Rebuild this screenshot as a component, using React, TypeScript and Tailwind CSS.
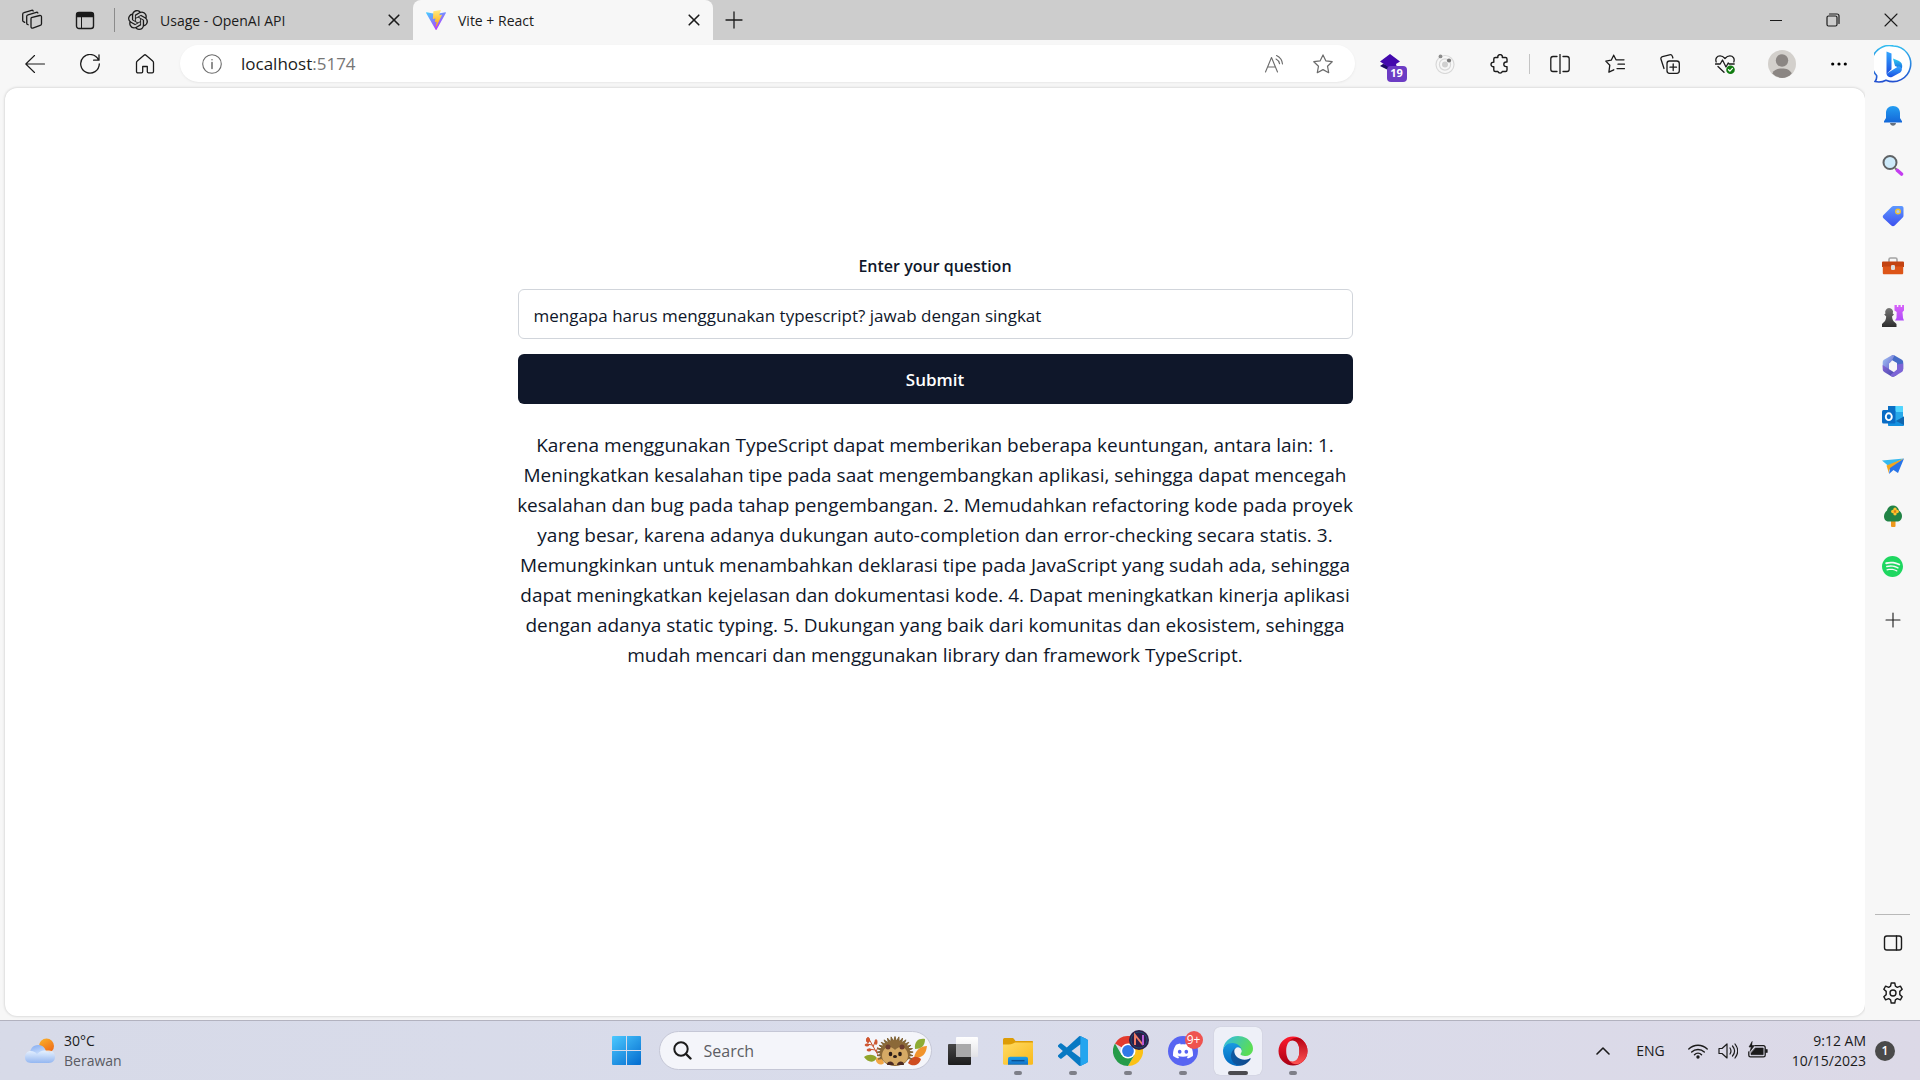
import { useState } from "react";
import type { ReactNode } from "react";
import { SiOpenai, SiDiscord, SiSpotify } from "react-icons/si";

type IconProps = { children: ReactNode; size?: string; box?: string; stroke?: string };

function Line({ children, size = "size-5", box = "0 0 20 20", stroke = "1.1" }: IconProps) {
  return (
    <svg className={`${size} shrink-0`} viewBox={box} fill="none" stroke="currentColor" strokeWidth={stroke} strokeLinecap="round" strokeLinejoin="round" aria-hidden="true">
      {children}
    </svg>
  );
}

function Art({ children, size = "size-[22px]", box = "0 0 22 22" }: IconProps) {
  return (
    <svg className={`${size} shrink-0`} viewBox={box} aria-hidden="true">
      {children}
    </svg>
  );
}

function Grad({ id, a, b, x2 = "0", y2 = "1" }: { id: string; a: string; b: string; x2?: string; y2?: string }) {
  return (
    <linearGradient id={id} x1="0" y1="0" x2={x2} y2={y2}>
      <stop offset="0" stopColor={a} />
      <stop offset="1" stopColor={b} />
    </linearGradient>
  );
}

function CloseIcon() {
  return (
    <Line size="size-3" box="0 0 12 12" stroke="1.6">
      <path d="M1.2 1.2l9.6 9.6M10.8 1.2l-9.6 9.6" />
    </Line>
  );
}

function ViteLogo() {
  return (
    <Art size="size-5" box="0 0 256 257">
      <defs>
        <Grad id="viteA" a="#41d1ff" b="#bd34fe" x2="0.6" />
        <Grad id="viteB" a="#ffea83" b="#ffa800" />
      </defs>
      <path fill="url(#viteA)" d="M255.153 37.938L134.897 252.976c-2.483 4.44-8.862 4.466-11.382.048L.875 37.958c-2.746-4.814 1.371-10.646 6.827-9.67l120.385 21.517a6.537 6.537 0 0 0 2.322-.004l117.867-21.483c5.438-.991 9.574 4.796 6.877 9.62Z" />
      <path fill="url(#viteB)" d="M185.432.063L96.44 17.501a3.268 3.268 0 0 0-2.634 3.014l-5.474 92.456a3.268 3.268 0 0 0 3.997 3.378l24.777-5.718c2.318-.535 4.413 1.507 3.936 3.838l-7.361 36.047c-.495 2.426 1.782 4.5 4.151 3.78l15.304-4.649c2.372-.72 4.652 1.36 4.15 3.788l-11.698 56.621c-.732 3.542 3.979 5.473 5.943 2.437l1.313-2.028l72.516-144.72c1.215-2.423-.88-5.186-3.54-4.672l-25.505 4.922c-2.396.462-4.435-1.77-3.759-4.114l16.646-57.705c.677-2.35-1.37-4.583-3.769-4.113Z" />
    </Art>
  );
}

function TabStrip() {
  return (
    <header className="flex h-10 items-stretch bg-[#cdcdcd] text-[14px] text-[#1b1b1b]">
      <div className="flex shrink-0 items-center pl-[21px]">
        <button aria-label="Workspaces" className="mr-8">
          <Line size="size-[22px]" box="0 0 22 22" stroke="1.3">
            <path d="M10.3 8.7l8.5-2.2c.9-.2 1.7.4 1.7 1.3v6.9c0 .8-.5 1.5-1.3 1.7l-7.4 2.7c-.9.3-1.8-.4-1.8-1.3V10c0-.6.1-1.100.3-1.300z" />
            <path d="M7.200 15.800l-.9-.5c-.4-.2-.6-.6-.6-1V7.500c0-.8.5-1.500 1.300-1.700l8.300-2.500c.7-.2 1.300.1 1.600.7" />
            <path d="M3.700 13.400l-1.400-.9c-.4-.2-.6-.6-.6-1V5.300c0-.8.5-1.500 1.300-1.700l7.600-2.300c.7-.2 1.300.1 1.600.7" />
          </Line>
        </button>
        <button aria-label="Tab actions" className="mr-[19px]">
          <Line size="size-5" stroke="1.4">
            <rect x="1.5" y="2.5" width="17" height="16" rx="2.5" />
            <path d="M2 3.5h16v3H2z" fill="currentColor" />
            <path d="M6.5 7v11" strokeWidth="1" />
          </Line>
        </button>
        <div className="h-6 w-px bg-[#8b8b8b]" />
      </div>
      <div className="flex w-[298px] shrink-0 items-center px-[13px]">
        <SiOpenai className="size-5 shrink-0" aria-hidden="true" />
        <span className="ml-3 flex-1 whitespace-nowrap">Usage - OpenAI API</span>
        <button aria-label="Close Usage tab"><CloseIcon /></button>
      </div>
      <div className="flex w-[300px] shrink-0 items-center rounded-t-lg bg-[#f7f7f7] px-[13px]">
        <ViteLogo />
        <span className="ml-3 flex-1 whitespace-nowrap">Vite + React</span>
        <button aria-label="Close Vite tab"><CloseIcon /></button>
      </div>
      <button aria-label="New tab" className="ml-3 shrink-0">
        <Line size="size-[18px]" box="0 0 18 18" stroke="1.3"><path d="M9 1v16M1 9h16" /></Line>
      </button>
      <div className="flex-1" />
      <div className="flex shrink-0 items-center">
        <button aria-label="Minimize" className="flex w-14 justify-center">
          <Line size="size-3" box="0 0 12 12"><path d="M0 6.5h12" /></Line>
        </button>
        <button aria-label="Restore" className="flex w-[58px] justify-center">
          <Line size="size-[14px]" box="0 0 14 14" stroke="1.2">
            <rect x="1" y="3" width="10" height="10" rx="1.5" />
            <path d="M3.5 1H11a2 2 0 0 1 2 2v7.5" />
          </Line>
        </button>
        <button aria-label="Close window" className="flex w-[58px] justify-center">
          <Line size="size-[14px]" box="0 0 14 14"><path d="M1 1l12 12M13 1L1 13" /></Line>
        </button>
      </div>
    </header>
  );
}

function Tool({ label, children, width = "w-[55px]" }: { label: string; children: ReactNode; width?: string }) {
  return (
    <button aria-label={label} className={`flex ${width} shrink-0 items-center justify-center`}>
      {children}
    </button>
  );
}

function Toolbar() {
  return (
    <nav className="flex h-[47px] items-stretch bg-[#f7f7f7] pl-[7px] text-[#1b1b1b]">
      <Tool label="Back"><Line><path d="M9.5 1.5L.8 10l8.7 8.5M1 10h18.5" /></Line></Tool>
      <Tool label="Refresh">
        <Line stroke="1.3"><path d="M18.5 6A9.3 9.3 0 1 0 19.3 10M19 .8v5.4h-5.4" /></Line>
      </Tool>
      <Tool label="Home">
        <Line stroke="1.3"><path d="M1.5 8.7c0-.7.3-1.3.8-1.7L9 1.2c.6-.5 1.4-.5 2 0L17.7 7c.5.4.8 1 .8 1.7v8.8c0 .8-.6 1.3-1.3 1.3H13.500c-.7 0-1.200-.5-1.200-1.200v-5.100H7.700v5.100c0 .7-.5 1.200-1.200 1.200H2.800c-.7 0-1.300-.5-1.300-1.300z" /></Line>
      </Tool>
      <div className="my-[5px] ml-2 flex flex-1 items-center rounded-full bg-white px-[22px] shadow-sm shadow-black/5">
        <button aria-label="Site information" className="text-[#6b6b6b]">
          <Line><circle cx="10" cy="10" r="9.3" /><path d="M10 8.5v6M10 5.7v.1" strokeWidth="1.5" /></Line>
        </button>
        <span className="ml-[19px] flex-1 text-[17px]">localhost<span className="text-[#767676]">:5174</span></span>
        <button aria-label="Read aloud" className="mr-[29px] text-[#6b6b6b]">
          <Line><path d="M1.5 18L7.5 3.5 13.5 18M3.7 13h7.7M12.5 1.5c3.5 1.7 5.7 5 6 8.5M12 5c2 1 3.2 2.7 3.6 4.8" /></Line>
        </button>
        <button aria-label="Add to favorites" className="text-[#6b6b6b]">
          <Line stroke="1.2"><path d="M10 .9l2.800 5.900 6.400.9-4.700 4.500 1.200 6.500L10 15.600l-5.700 3.100 1.200-6.500L.8 7.700l6.400-.9z" /></Line>
        </button>
      </div>
      <div className="ml-[7px] flex items-stretch">
        <Tool label="Layers extension, 19">
          <span className="relative block size-5">
            <svg viewBox="0 0 20 20" className="size-5" aria-hidden="true">
              <path d="M0 12l3-2 14 2-7 5z" fill="#1b0a63" />
              <path d="M10 0l10 7.500-4 2.500.5 2L10 14.500 3 9.500 0 7.500z" fill="#4309ad" />
            </svg>
            <span className="absolute top-3 left-[7px] flex h-4 w-5 items-center justify-center rounded-sm bg-[#6c3cc4] text-[11px] font-bold text-white">19</span>
          </span>
        </Tool>
        <Tool label="Orbit extension">
          <Art size="size-5" box="0 0 20 20">
            <g fill="none" stroke="#d8d8d8" strokeWidth="1.2"><circle cx="10" cy="10.5" r="9" /><circle cx="10" cy="10.5" r="5.6" /></g>
            <circle cx="10" cy="10.5" r="3" fill="#d0d0d0" />
            <circle cx="5.5" cy="2.4" r="1.9" fill="#8c8c8c" /><circle cx="14" cy="6.5" r="2.1" fill="#7a7a7a" />
          </Art>
        </Tool>
        <Tool label="Extensions">
          <Line stroke="1.4"><path d="M5.300 3.500h2.600a2.300 2.300 0 1 1 4.400 0h3.200c.9 0 1.500.6 1.500 1.500v3h-.9a2.300 2.300 0 0 0 0 4.600h.9V16c0 .9-.6 1.500-1.500 1.500h-3.200a2.300 2.300 0 0 1-4.400 0H5.300c-.9 0-1.500-.6-1.500-1.500v-3.300a2.300 2.300 0 1 1 0-4.500V5c0-.9.6-1.500 1.500-1.500z" /></Line>
        </Tool>
        <div className="flex w-[5px] items-center justify-center"><div className="h-5 w-px bg-[#c4c4c4]" /></div>
        <Tool label="Split screen">
          <Line stroke="1.3"><path d="M7 2.5H3A2.3 2.3 0 0 0 .8 4.800v10.400A2.300 2.300 0 0 0 3 17.500h4M13 2.500h4a2.300 2.300 0 0 1 2.200 2.300v10.400a2.300 2.300 0 0 1-2.200 2.300h-4M10 .5v19" /></Line>
        </Tool>
        <Tool label="Favorites">
          <Line stroke="1.3"><path d="M11 5.800L8.700 1.200 6.200 6.200.8 7.100l4 4.100-.9 7 4.900-2.400M8.700 1.200L11 5.800h8M13 10.200h6.500M12 14.600h7.500" /></Line>
        </Tool>
        <Tool label="Collections">
          <Line stroke="1.3"><rect x="7" y="7" width="12.3" height="12.3" rx="2.5" /><path d="M13.200 10v6.500M10 13.200h6.500M4 14.500L1 5.300c-.4-1.200.3-2.400 1.500-2.700l7-1.800c1.300-.3 2.500.4 2.900 1.600l.5 1.600" /></Line>
        </Tool>
        <Tool label="Browser essentials">
          <Line stroke="1.3">
            <path d="M1.200 8C0 4.500 2 1.800 5.100 1.800 7 1.800 8.500 2.700 10 4.500c1.500-1.800 3-2.700 4.900-2.700C18 1.800 20 4.500 18.800 8M.5 10h4.700l2.300-4 3.500 7 2.200-4 1 1h5M3 12.500l6 5.700" />
            <circle cx="15.5" cy="15.7" r="4.3" fill="#107c10" stroke="none" /><path d="M13.500 15.700l1.400 1.400 2.500-2.700" stroke="#fff" />
          </Line>
        </Tool>
        <Tool label="Profile" width="w-[60px]">
          <Art size="size-7" box="0 0 28 28">
            <circle cx="14" cy="14" r="14" fill="#d3d0cc" /><circle cx="14" cy="10.5" r="6.2" fill="#8b8683" />
            <path d="M4.300 23.500C6 19.800 9.500 18.500 14 18.500s8 1.300 9.700 5A14 14 0 0 1 14 28a14 14 0 0 1-9.700-4.500z" fill="#8b8683" />
          </Art>
        </Tool>
        <Tool label="Settings and more" width="w-[54px]">
          <Art size="size-4" box="0 0 16 16"><circle cx="1.7" cy="8" r="1.6" /><circle cx="8" cy="8" r="1.6" /><circle cx="14.3" cy="8" r="1.6" /></Art>
        </Tool>
        <Tool label="Bing chat" width="w-[54px]">
          <Art size="size-[38px]" box="0 0 38 38">
            <defs><Grad id="ring" a="#32bdf0" b="#2350d0" /><Grad id="b1" a="#35a7ff" b="#1b4fe0" /><Grad id="b2" a="#30d0ee" b="#1768e5" /></defs>
            <path d="M19.500 1A17.800 17.800 0 1 1 12 35.200C8.500 37 4.500 37.300 1 36.500c1.700-2 2-3.500 1.600-6A17.700 17.700 0 0 1 19.500 1z" fill="#fff" stroke="url(#ring)" strokeWidth="1.6" />
            <path d="M12.500 6.500l5 1.900v15.800l-5 4.700z" fill="url(#b1)" />
            <path d="M19 13.500l5.500 2.300c3.500 1.500 4.300 4.700 3.300 8L21 21z" fill="url(#b2)" />
            <path d="M12.500 28.700l12-7.500c3.500.5 4.600 4 1.800 6.200L18 31.900c-2.500 1-5-.5-5.500-3.200z" fill="url(#b1)" />
          </Art>
        </Tool>
      </div>
    </nav>
  );
}

const sideApps: { name: string; art: ReactNode }[] = [
  { name: "Notifications", art: <Art><defs><Grad id="bell" a="#239df2" b="#1467d8" /></defs><path d="M8 18h6c-.3 1.700-1.500 2.700-3 2.700S8.300 19.700 8 18z" fill="#65707d" /><path d="M11 1c4.500 0 7 3 7 7v5l2 3.200V17.500H2v-1.300L4 13V8c0-4 2.500-7 7-7z" fill="url(#bell)" /></Art> },
  { name: "Search", art: <Art><path d="M13 13l3 3" stroke="#777" strokeWidth="2" /><path d="M15.500 15.500l4 3.500" stroke="#c43df0" strokeWidth="3.6" strokeLinecap="round" /><circle cx="8" cy="7.5" r="6.5" fill="#cdeafa" stroke="#5f6265" strokeWidth="2" /></Art> },
  { name: "Shopping", art: <Art><defs><Grad id="tag" a="#5d98ff" b="#3d50ef" /></defs><path d="M12 1h7.500C20.700 1 21.500 1.800 21.500 3v7.500c0 1-.3 1.600-1 2.300l-7.800 7.700c-1 1-2.400 1-3.400 0L1.500 13.200c-1-1-1-2.200 0-3.200L9.500 1.900C10.300 1.200 11 1 12 1z" fill="url(#tag)" /><circle cx="16" cy="6.5" r="2.3" fill="#a6c8ff" stroke="#f2c230" strokeWidth="1.4" /></Art> },
  { name: "Tools", art: <Art><path d="M7 7V4.500C7 3.500 7.500 3 8.500 3h5c1 0 1.500.5 1.500 1.500V7" fill="none" stroke="#a4a4a4" strokeWidth="1.6" /><path d="M1 6.500h20a1 1 0 0 1 1 1V12H0V7.500a1 1 0 0 1 1-1z" fill="#c34312" /><path d="M.8 11.500h20.400V18c0 .9-.5 1.300-1.300 1.300H2.100c-.8 0-1.300-.4-1.300-1.300z" fill="#dd5518" /><rect x="9" y="10" width="4" height="5" rx="1.3" fill="#ddd" /></Art> },
  { name: "Games", art: <Art><defs><Grad id="pawn" a="#777" b="#2e2e2e" /><Grad id="rook" a="#d862fa" b="#b04cf8" /></defs><path d="M12.500 0h2.400v2h1.400V0h2.400v2h1.400V0H22v5.500l-1.500 1.500.5 6 1 2.500h-9L14.500 13l.2-6-2.200-1.500z" fill="url(#rook)" /><path d="M7 3a4 4 0 0 1 3.700 5.600l1.300.8-2 2c.3 3 1.200 4.600 3 6.200L14.500 19v3H0v-3l1.500-1.400c1.700-1.600 2.500-3.200 2.700-6.200l-2-2 1.300-.8A4 4 0 0 1 7 3z" fill="url(#pawn)" /></Art> },
  { name: "Microsoft 365", art: <Art><defs><Grad id="mA" a="#a4c8f5" b="#6257c9" x2="1" /><Grad id="mB" a="#8967d8" b="#3b46a5" x2="1" /></defs><path d="M10 .2c1.400-.4 2 0 3 .5l6.500 3.900c1.200.7 1.700 1.500 1.700 3V14L15 10.300V8L8 4z" fill="#476cc7" /><path d="M12.500.3L10 5.500 7 9v7.500l-5-2.500c-1-.6-1.300-1.300-1.300-2.500V7.500c0-1.400.5-2.300 1.700-3L9 .7c1-.6 2-.8 3.500-.4z" fill="url(#mA)" /><path d="M.7 10v4c0 1.500.6 2.500 1.900 3.200l6.200 3.800c1.500.9 2.800.9 4.300 0l2.500-1.500-8-5z" fill="url(#mB)" /><path d="M21.200 8.500V14c0 1.500-.5 2.500-1.800 3.300l-6.300 3.700c-1.500.9-2.900.9-4.300 0l-1-.6 7.200-5.900V9.500z" fill="#7d65d6" /><path d="M11 6.500l4 2.300v4.400l-4 2.300-4-2.300V8.800z" fill="#f7f7f7" /></Art> },
  { name: "Outlook", art: <Art><rect x="6" y="1" width="15" height="19" rx="1.5" fill="#28a8ea" /><path d="M6 1h7.500v6H6z" fill="#0a6fc4" /><path d="M13.500 1H20a1 1 0 0 1 1 1v5h-7.500z" fill="#51d6ff" /><path d="M6 12l7.500 4L22 11.500V20c0 .7-.5 1-1 1H7c-.6 0-1-.4-1-1z" fill="#1490df" /><path d="M22 11.500V20L14 16z" fill="#1166ae" /><rect x="0" y="5" width="13.5" height="13.5" rx="1.5" fill="#0a6cc5" /><ellipse cx="6.8" cy="11.7" rx="3" ry="3.4" fill="none" stroke="#fff" strokeWidth="1.9" /></Art> },
  { name: "Drop", art: <Art><path d="M0 5.500l22-2L6.500 11z" fill="#35b9ef" /><path d="M22 3.500L7 15v3.500L4.500 10.500z" fill="#f1a51e" /><path d="M22 3.500l-6 14.500-4.500-3L7 19l1-6z" fill="#2874e8" /></Art> },
  { name: "Tree", art: <Art><path d="M9 15h4.500v6a1 1 0 0 1-1 1H10a1 1 0 0 1-1-1z" fill="#ee981c" /><path d="M11 .5c3 0 5.500 2 6 5 2 1.500 3 3.200 3 5.500 0 3.500-2 5.500-5 5.500H7c-3 0-5-2-5-5C2 9 3 7.300 5 5.500c.5-3 3-5 6-5z" fill="#218345" /><g fill="#ffc32e"><circle cx="13" cy="4.3" r="1.7" /><circle cx="13" cy="8.7" r="1.7" /><circle cx="10.8" cy="6.5" r="1.7" /><circle cx="15.2" cy="6.5" r="1.7" /></g><circle cx="13" cy="6.5" r="1.2" fill="#e27b13" /></Art> },
  { name: "Spotify", art: <SiSpotify className="size-[21px] text-[#1ed760]" aria-hidden="true" /> },
];

function Sidebar() {
  return (
    <aside className="flex w-[55px] shrink-0 flex-col items-center bg-[#f7f7f7] pt-[3px] text-[#1b1b1b]">
      {sideApps.map((app) => (
        <button key={app.name} aria-label={app.name} className="flex h-[50px] w-full items-center justify-center">{app.art}</button>
      ))}
      <button aria-label="Customize" className="mt-1 flex h-[50px] w-full items-center justify-center">
        <Line size="size-4" box="0 0 16 16"><path d="M8 1v14M1 8h14" /></Line>
      </button>
      <div className="mt-auto h-px w-[35px] bg-[#b9b9b9]" />
      <button aria-label="Toggle sidebar" className="mt-[3px] flex h-[50px] w-full items-center justify-center">
        <Line stroke="1.4"><rect x="1.5" y="3" width="17" height="14" rx="2.3" /><path d="M13.500 3v14" /></Line>
      </button>
      <button aria-label="Settings" className="mb-[2px] flex h-[50px] w-full items-center justify-center">
        <Line size="size-[22px]" box="0 0 22 22" stroke="1.4"><path d="M9.200 1h3.600l.6 3.200 1.900 1.100 3.100-1.100 1.800 3.100-2.400 2.100v3.200l2.400 2.100-1.800 3.100-3.100-1.100-1.900 1.100-.6 3.200H9.200l-.6-3.200-1.900-1.100-3.100 1.100-1.800-3.100 2.400-2.100V9.400L1.800 7.300l1.800-3.100 3.100 1.100 1.900-1.100z" /><circle cx="11" cy="11" r="3" /></Line>
      </button>
    </aside>
  );
}

const answer = [
  "Karena menggunakan TypeScript dapat memberikan beberapa keuntungan, antara lain: 1.",
  "Meningkatkan kesalahan tipe pada saat mengembangkan aplikasi, sehingga dapat mencegah",
  "kesalahan dan bug pada tahap pengembangan. 2. Memudahkan refactoring kode pada proyek",
  "yang besar, karena adanya dukungan auto-completion dan error-checking secara statis. 3.",
  "Memungkinkan untuk menambahkan deklarasi tipe pada JavaScript yang sudah ada, sehingga",
  "dapat meningkatkan kejelasan dan dokumentasi kode. 4. Dapat meningkatkan kinerja aplikasi",
  "dengan adanya static typing. 5. Dukungan yang baik dari komunitas dan ekosistem, sehingga",
  "mudah mencari dan menggunakan library dan framework TypeScript.",
];

function QuestionPage() {
  const [question, setQuestion] = useState("mengapa harus menggunakan typescript? jawab dengan singkat");
  return (
    <main className="ml-[5px] mb-1 flex flex-1 justify-center rounded-xl bg-white pt-[164px] text-[#0f172a] shadow-[0_0_3px_rgba(0,0,0,0.22)]">
      <div className="flex w-[835px] flex-col">
        <form className="flex flex-col" onSubmit={(e) => e.preventDefault()}>
          <label htmlFor="question" className="text-center text-[16px] leading-7 font-semibold">Enter your question</label>
          <input id="question" value={question} onChange={(e) => setQuestion(e.target.value)} className="mt-[9px] h-[50px] rounded-md border border-[#d1d5db] bg-white px-[15px] pt-[2px] text-[17px] outline-none" />
          <button type="submit" className="mt-[15px] h-[50px] rounded-md bg-[#0f172a] pt-[2px] text-[17px] font-semibold text-white">Submit</button>
        </form>
        <p className="mt-[26px] text-center text-[19px] leading-[30px] whitespace-nowrap">
          {answer.map((line) => (
            <span key={line} className="flex justify-center">{line}</span>
          ))}
        </p>
      </div>
    </main>
  );
}

function Hedgehog() {
  const spikes = Array.from({ length: 19 }, (_, i) => {
    const a = Math.PI * (-0.12 + (1.24 * i) / 18);
    const p = (r: number, t: number) => `${31 - Math.cos(t) * r * 1.1} ${17 - Math.sin(t) * r}`;
    return `M${p(11, a - 0.13)}L${p(16.5, a)}L${p(11, a + 0.13)}`;
  }).join("");
  return (
    <Art size="h-[30px] w-[63px]" box="0 0 63 30">
      <g stroke="#c8502b" strokeWidth="1" fill="#d9572e"><path d="M14 19L5 3M8 9L3 8M9 11l2-5M11 14l-6-1M12 16l2-5" /><ellipse cx="4" cy="4" rx="1.5" ry="2.5" /><ellipse cx="3" cy="9" rx="2" ry="1" /><ellipse cx="12" cy="6" rx="1" ry="2.5" /><ellipse cx="5" cy="14" rx="2" ry="1" /></g>
      <path d="M0 21c4-3 10-3 13 1-3 5-9 5-13-1z" fill="#91a52c" />
      <path d="M12 25c-1-5 6-5 8 2-3 3-7 1-8-2z" fill="#f2a644" />
      <path d="M51 13C50 5 55 2 61 3c0 7-4 10-10 10z" fill="#8eac35" />
      <path d="M50 22c1-8 7-12 13-12-1 8-4 12-13 12z" fill="#f1942c" />
      <path d="M44 27c3-7 8-8 13-4-2 7-9 8-13 4z" fill="#cf4d20" />
      <path d={spikes} fill="#806335" stroke="#806335" />
      <ellipse cx="31" cy="17" rx="15" ry="13" fill="#8b6938" />
      <path d="M18 20c0-5 3-9 7-9 3 0 5 2 6 3 1-1 3-3 6-3 4 0 7 4 7 9 0 6-6 9-13 9s-13-3-13-9z" fill="#d5aa65" />
      <circle cx="24" cy="11" r="2.5" fill="#6c3d31" /><circle cx="38" cy="11" r="2.5" fill="#6c3d31" />
      <ellipse cx="26.5" cy="18" rx="1.8" ry="2.2" fill="#2b1d18" /><ellipse cx="36" cy="18" rx="1.8" ry="2.2" fill="#2b1d18" />
      <ellipse cx="31" cy="20.5" rx="2" ry="1.5" fill="#2b1d18" />
      <path d="M23 29c0-5 7-4 7 0zM33 29c0-4 7-5 7 0z" fill="#4a2a23" />
    </Art>
  );
}

const Explorer = (
  <Art size="size-[30px]" box="0 0 30 30">
    <defs><Grad id="fold" a="#ffdb63" b="#f9b91b" x2="1" /><Grad id="foldB" a="#1ca0e8" b="#1270c8" /></defs>
    <path d="M0 3.500A1.500 1.500 0 0 1 1.500 2H9c1 0 1.500.3 2 1l1.500 2H29c.6 0 1 .4 1 1v6H0z" fill="#dd9c05" />
    <path d="M0 8.500c5 0 9 .3 12-2h18v21c0 .8-.4 1.200-1.200 1.200H1.200C.4 28.700 0 28.300 0 27.500z" fill="url(#fold)" />
    <path d="M5 28.700V23c0-1.500.8-2.300 2.300-2.300h15.400c1.500 0 2.300.8 2.300 2.300v5.700z" fill="url(#foldB)" /><path d="M8.500 24.700h13" stroke="#094f91" strokeWidth="1.3" />
  </Art>
);
const VsCode = (
  <Art size="size-[30px]" box="0 0 24 24">
    <path fill="#0879c3" d="M23.150 2.587L18.210.210a1.494 1.494 0 0 0-1.705.290l-9.460 8.630-4.120-3.128a.999.999 0 0 0-1.276.057L.327 7.261A1 1 0 0 0 .326 8.740L3.899 12 .326 15.260a1 1 0 0 0 .001 1.479L1.650 17.940a.999.999 0 0 0 1.276.057l4.120-3.128 9.460 8.630a1.492 1.492 0 0 0 1.704.290l4.942-2.377A1.500 1.500 0 0 0 24 20.060V3.939a1.500 1.500 0 0 0-.850-1.352zm-5.146 14.861L10.826 12l7.178-5.448v10.896z" />
    <path fill="#25a5ef" d="M18 .1l5.150 2.487c.5.300.850.800.850 1.352V20.060c0 .600-.300 1.100-.850 1.352L18 23.900z" />
  </Art>
);
const Chrome = (
  <span className="relative block size-[30px]">
    <Art size="size-[30px]" box="0 0 30 30">
      <path d="M15 15L2 7.500A15 15 0 0 1 28 7.500z" fill="#e33b2e" />
      <path d="M15 15V7.500h13A15 15 0 0 1 15 30l6.500-11.200z" fill="#fbc116" />
      <path d="M15 15l6.500 3.800L15 30A15 15 0 0 1 2 7.500l6.500 11.300z" fill="#259b48" />
      <circle cx="15" cy="15" r="7.5" fill="#fff" /><circle cx="15" cy="15" r="5.9" fill="#3079e8" />
    </Art>
    <svg viewBox="0 0 20 20" className="absolute -top-[6px] left-4 size-5" aria-hidden="true">
      <circle cx="10" cy="10" r="10" fill="#2d1c48" /><circle cx="10" cy="10" r="8" fill="none" stroke="#1b4d70" />
      <path d="M6 15V5l8 10" fill="none" stroke="#ef7b66" strokeWidth="2" /><path d="M14 15V5" stroke="#b65cd8" strokeWidth="2" />
    </svg>
  </span>
);
const Discord = (
  <span className="relative flex size-[30px] items-center justify-center rounded-full bg-[#5865f2]">
    <SiDiscord className="size-5 text-white" aria-hidden="true" />
    <span className="absolute -top-[5px] left-[17px] flex size-[18px] items-center justify-center rounded-full bg-[#ef5350] text-[12px] text-white">9+</span>
  </span>
);
const Edge = (
  <Art size="size-[30px]" box="0 0 256 256">
    <defs><Grad id="eA" a="#0c59a4" b="#114a8b" x2="1" y2="0" /><Grad id="eB" a="#1b9de2" b="#0067c0" /><Grad id="eC" a="#2fb9ee" b="#5bdd55" x2="1" y2="0.4" /></defs>
    <path fill="url(#eA)" d="M231 190.500c-3.400 1.800-6.900 3.400-10.500 4.700a101.500 101.500 0 0 1-35.900 6.400c-47.300 0-88.500-32.500-88.500-74.300a31.500 31.500 0 0 1 16.400-27.300c-42.800 1.800-53.800 46.400-53.800 72.500 0 74 68.100 81.400 82.800 81.400 7.900 0 19.800-2.300 27-4.600l1.300-.4a128.300 128.300 0 0 0 66.600-52.800 4 4 0 0 0-5.400-5.600Z" />
    <path fill="url(#eB)" d="M105.700 241.400a79.200 79.200 0 0 1-22.700-21.300 80.700 80.700 0 0 1 29.500-120c3.200-1.500 8.500-4.100 15.600-4a32.400 32.400 0 0 1 25.700 13 31.900 31.900 0 0 1 6.300 18.700c0-.2 24.500-79.600-80-79.600-43.900 0-80 41.700-80 78.200a130.200 130.200 0 0 0 12.100 56 128 128 0 0 0 156.400 67 75.500 75.500 0 0 1-62.800-8Z" />
    <path fill="url(#eC)" d="M152.300 148.900c-.9 1-3.400 2.500-3.400 5.600 0 2.600 1.700 5.200 4.800 7.300 14.300 10 41.400 8.600 41.500 8.600a59.600 59.600 0 0 0 30.300-8.300 61.400 61.400 0 0 0 30.400-52.900c.3-22.400-8-37.300-11.300-43.900C223.500 23.900 177.700 0 128 0A128 128 0 0 0 0 126.200c.5-36.500 36.800-66 80-66 3.500 0 23.500.3 42 10a72.600 72.600 0 0 1 30.900 29.300c6.100 10.600 7.200 24.100 7.200 29.500s-2.700 13.300-7.800 19.900Z" />
  </Art>
);
const Opera = (
  <Art size="size-[30px]" box="0 0 30 30">
    <defs><Grad id="oA" a="#ff1b2d" b="#a70014" /><Grad id="oB" a="#b50012" b="#ff5454" /></defs>
    <path fillRule="evenodd" fill="url(#oA)" d="M15 .5a14.500 14.500 0 1 1 0 29 14.500 14.500 0 0 1 0-29zm0 3.500C10.500 4 8.200 9 8.200 15S10.500 26 15 26s6.300-5 6.300-11S19.500 4 15 4z" />
    <path fill="url(#oB)" d="M11 5.500C16-.5 23 2 25 4.500c6 6 6 15 0 21C22 28 16 30.500 11 24.500c5 3 10.500-1 10.500-9.500S16 2.500 11 5.500z" />
  </Art>
);

const taskApps = [
  { name: "File Explorer", icon: Explorer, active: false },
  { name: "Visual Studio Code", icon: VsCode, active: false },
  { name: "Google Chrome", icon: Chrome, active: false },
  { name: "Discord", icon: Discord, active: false },
  { name: "Microsoft Edge", icon: Edge, active: true },
  { name: "Opera", icon: Opera, active: false },
];

function Taskbar() {
  return (
    <footer className="grid h-[60px] grid-cols-[1fr_auto_1fr] items-center border-t border-[#b2b2bf] bg-linear-to-r from-[#d7dae8] via-[#d9dceb] to-[#dcd9e7] text-[14px] leading-5 text-[#1b1b1b]">
      <button className="flex items-center justify-self-start pl-[25px] text-left">
        <Art size="h-[26px] w-[30px]" box="0 0 30 26">
          <defs><Grad id="sun" a="#fbb52a" b="#ef6b18" x2="0.6" /><Grad id="cl" a="#83aaf0" b="#dcecff" x2="0.5" /><Grad id="clB" a="#eaf4ff" b="#8db3f2" /></defs>
          <circle cx="21.5" cy="8" r="7.5" fill="url(#sun)" />
          <path d="M5 17c-.5-6 3-10 8-10 4.500 0 7 2.500 8 6.500 4 0 5 3 4 5.500z" fill="url(#cl)" />
          <path d="M5.500 13c3 0 5.500 1.500 6.500 3.500 2-2.500 4.500-4 7.500-4H24c4 0 6 3 6 6.300 0 4-2.500 6.200-6 6.200H6c-3.500 0-6-2-6-5.700C0 15.500 2.500 13 5.500 13z" fill="url(#clB)" opacity=".9" />
        </Art>
        <span className="ml-[9px] flex flex-col"><span>30°C</span><span className="text-[#5a5b63]">Berawan</span></span>
      </button>
      <div className="flex h-full items-center pl-2">
        <button aria-label="Start" className="mr-[18px]">
          <Art size="size-[29px]" box="0 0 29 29">
            <defs><linearGradient id="win" gradientUnits="userSpaceOnUse" x1="0" y1="0" x2="24" y2="29"><stop stopColor="#4cc9ff" /><stop offset="1" stopColor="#0872d2" /></linearGradient></defs>
            <path d="M1 0h13v14H0V1a1 1 0 0 1 1-1zM15 0h13a1 1 0 0 1 1 1v13H15zM0 15h14v14H1a1 1 0 0 1-1-1zM15 15h14v13a1 1 0 0 1-1 1H15z" fill="url(#win)" />
          </Art>
        </button>
        <label className="flex h-[39px] w-[273px] items-center rounded-full border border-[#c5c7d6] bg-[#f4f5fa] pr-1 pl-[13px]">
          <Line size="size-[19px]" box="0 0 19 19" stroke="2"><circle cx="8" cy="8" r="6.7" /><path d="M13 13l4.500 4.500" strokeWidth="2.4" /></Line>
          <input aria-label="Search" placeholder="Search" className="ml-3 min-w-0 flex-1 bg-transparent text-[16px] outline-none placeholder:text-[#5c5d64]" />
          <Hedgehog />
        </label>
        <button aria-label="Task view" className="mx-4">
          <Art size="size-[30px]" box="0 0 30 30">
            <defs><Grad id="tv" a="#464646" b="#1d1d1d" /><Grad id="tvW" a="#ffffff" b="#e2e2e6" /></defs>
            <rect x="0" y="8" width="23" height="21" rx="1" fill="url(#tv)" /><rect x="8" y="1" width="22" height="20" rx="1" fill="url(#tvW)" /><path d="M8 8h15v13H8z" fill="#a9a9aa" />
          </Art>
        </button>
        <div className="flex h-full items-center gap-[7px]">
          {taskApps.map((app) => (
            <button key={app.name} aria-label={app.name} className={app.active ? "relative flex size-12 items-center justify-center rounded-md bg-[#eef0f8] shadow-[0_0_1px_rgba(0,0,0,0.2)]" : "relative flex size-12 items-center justify-center"}>
              {app.icon}
              <span className={app.active ? "absolute bottom-0 h-1 w-5 rounded-full bg-[#4b4b50]" : "absolute bottom-0 h-1 w-2 rounded-full bg-[#7e7f88]"} />
            </button>
          ))}
        </div>
      </div>
      <div className="flex items-center justify-self-end pr-[25px]">
        <button aria-label="Show hidden icons" className="mr-[26px]"><Line size="size-[14px]" box="0 0 14 14" stroke="1.6"><path d="M1 10l6-6 6 6" /></Line></button>
        <button className="mr-[23px]">ENG</button>
        <button aria-label="Network, volume and battery" className="flex items-center gap-[10px]">
          <Line stroke="1.4"><path d="M.8 8a13 13 0 0 1 18.400 0M3.700 11a9 9 0 0 1 12.600 0M6.500 13.700a5 5 0 0 1 7 0" /><circle cx="10" cy="16" r="1" fill="currentColor" /></Line>
          <Line stroke="1.2"><path d="M1 7.500h3L9 3v14l-5-4.500H1zM12 7c1.300 2 1.300 4 0 6M14.500 5c2.500 3 2.500 7 0 10M17 3c3.500 4.500 3.500 9.500 0 14" /></Line>
          <Line stroke="1.3"><path d="M7 4.700h8.500A1.700 1.700 0 0 1 17.200 6.400v7.800a1.700 1.700 0 0 1-1.700 1.700H2.500A1.700 1.700 0 0 1 .8 14.200V11" /><path d="M7.500 7h7.700v6.700H3V12zM17.700 8.500h1.600v3h-1.600zM4 .8L1 6h2.300L2 10.500 6.500 4.500H4z" fill="currentColor" strokeWidth=".6" /></Line>
        </button>
        <button className="ml-6 flex flex-col items-end"><span>9:12 AM</span><span>10/15/2023</span></button>
        <span className="ml-[9px] flex size-5 items-center justify-center rounded-full bg-[#4a4a4a] text-[12px] font-semibold text-white">1</span>
      </div>
    </footer>
  );
}

export default function App() {
  return (
    <div className="flex min-h-screen flex-col bg-[#f7f7f7] font-['Open_Sans','Noto_Sans',sans-serif]">
      <TabStrip />
      <Toolbar />
      <div className="flex flex-1 pt-px">
        <QuestionPage />
        <Sidebar />
      </div>
      <Taskbar />
    </div>
  );
}
